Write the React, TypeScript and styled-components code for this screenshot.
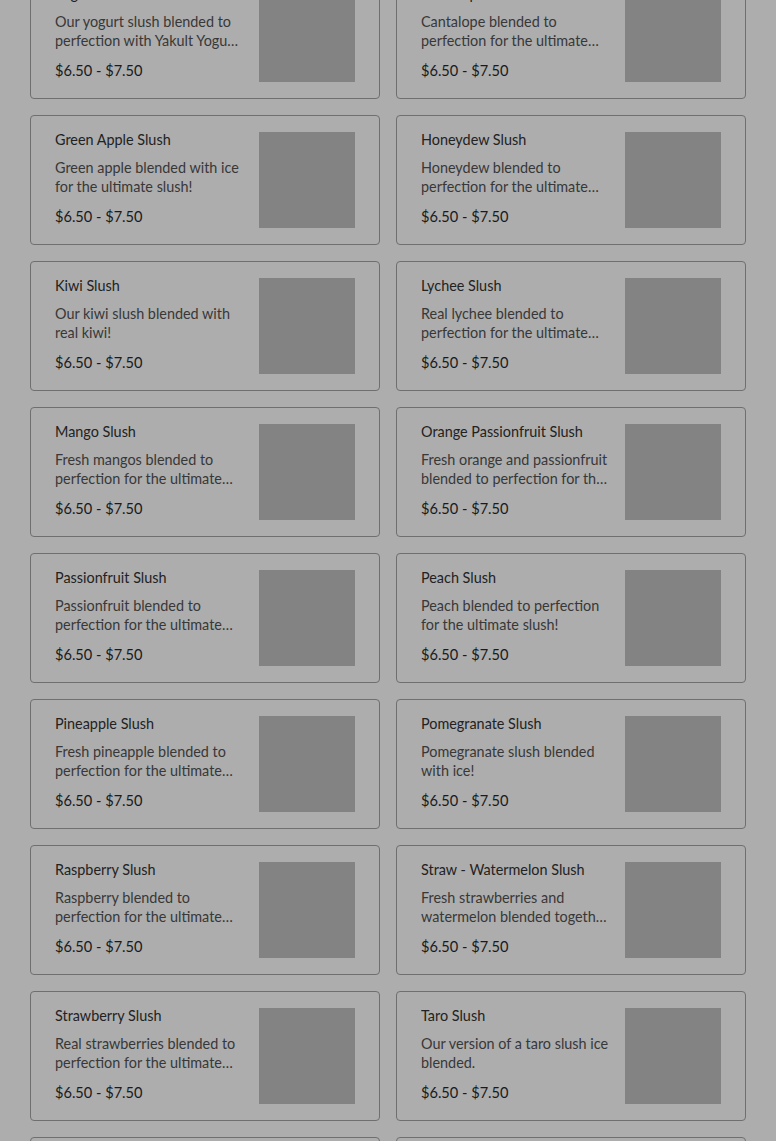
import styled, { createGlobalStyle } from 'styled-components'

const GlobalStyle = createGlobalStyle`
  html, body {
    margin: 0;
    padding: 0;
    background-color: #adadad;
    overflow: hidden;
  }

  body {
    font-family: Lato, "Liberation Sans", sans-serif;
    color: #1c1c1c;
  }
`

const Page = styled.div`
  padding: 0 30px;
`

const Grid = styled.div`
  display: grid;
  grid-template-columns: repeat(2, 1fr);
  gap: 16px;
  margin-top: -31px;
`

const Card = styled.div`
  display: flex;
  gap: 16px;
  padding: 16px 24px;
  border: 1px solid #6f6f6f;
  border-radius: 4px;
  background-color: #adadad;
`

const Info = styled.div`
  flex: 1;
  min-width: 0;
  display: flex;
  flex-direction: column;
`

const Name = styled.div`
  font-size: 14.4px;
  line-height: 16px;
  color: #222;
  margin-bottom: 10px;
  white-space: nowrap;
  overflow: hidden;
  text-overflow: ellipsis;
`

const Description = styled.div`
  font-size: 14.4px;
  line-height: 19px;
  color: #383838;
  display: -webkit-box;
  -webkit-line-clamp: 2;
  -webkit-box-orient: vertical;
  overflow: hidden;
  margin-bottom: 11px;
`

const Price = styled.div`
  font-size: 14.6px;
  line-height: 20px;
  color: #1a1a1a;
`

const Thumb = styled.div`
  width: 96px;
  height: 96px;
  flex-shrink: 0;
  background-color: #838383;
`

const items = [
  { name: 'Yogurt Slush', desc: 'Our yogurt slush blended to perfection with Yakult Yogurt for the ultimate slush!' },
  { name: 'Cantalope Slush', desc: 'Cantalope blended to perfection for the ultimate slush!' },
  { name: 'Green Apple Slush', desc: 'Green apple blended with ice for the ultimate slush!' },
  { name: 'Honeydew Slush', desc: 'Honeydew blended to perfection for the ultimate slush!' },
  { name: 'Kiwi Slush', desc: 'Our kiwi slush blended with real kiwi!' },
  { name: 'Lychee Slush', desc: 'Real lychee blended to perfection for the ultimate slush!' },
  { name: 'Mango Slush', desc: 'Fresh mangos blended to perfection for the ultimate slush!' },
  { name: 'Orange Passionfruit Slush', desc: 'Fresh orange and passionfruit blended to perfection for the ultimate slush!' },
  { name: 'Passionfruit Slush', desc: 'Passionfruit blended to perfection for the ultimate slush!' },
  { name: 'Peach Slush', desc: 'Peach blended to perfection for the ultimate slush!' },
  { name: 'Pineapple Slush', desc: 'Fresh pineapple blended to perfection for the ultimate slush!' },
  { name: 'Pomegranate Slush', desc: 'Pomegranate slush blended with ice!' },
  { name: 'Raspberry Slush', desc: 'Raspberry blended to perfection for the ultimate slush!' },
  { name: 'Straw - Watermelon Slush', desc: 'Fresh strawberries and watermelon blended together for the ultimate slush!' },
  { name: 'Strawberry Slush', desc: 'Real strawberries blended to perfection for the ultimate slush!' },
  { name: 'Taro Slush', desc: 'Our version of a taro slush ice blended.' },
  { name: 'Watermelon Slush', desc: 'Fresh watermelon blended to perfection for the ultimate slush!' },
  { name: 'Yakult Slush', desc: 'Yakult blended to perfection for the ultimate slush!' },
]

export default function App() {
  return (
    <>
      <GlobalStyle />
      <Page>
        <Grid>
          {items.map((item) => (
            <Card key={item.name}>
              <Info>
                <Name>{item.name}</Name>
                <Description>{item.desc}</Description>
                <Price>$6.50 - $7.50</Price>
              </Info>
              <Thumb />
            </Card>
          ))}
        </Grid>
      </Page>
    </>
  )
}
